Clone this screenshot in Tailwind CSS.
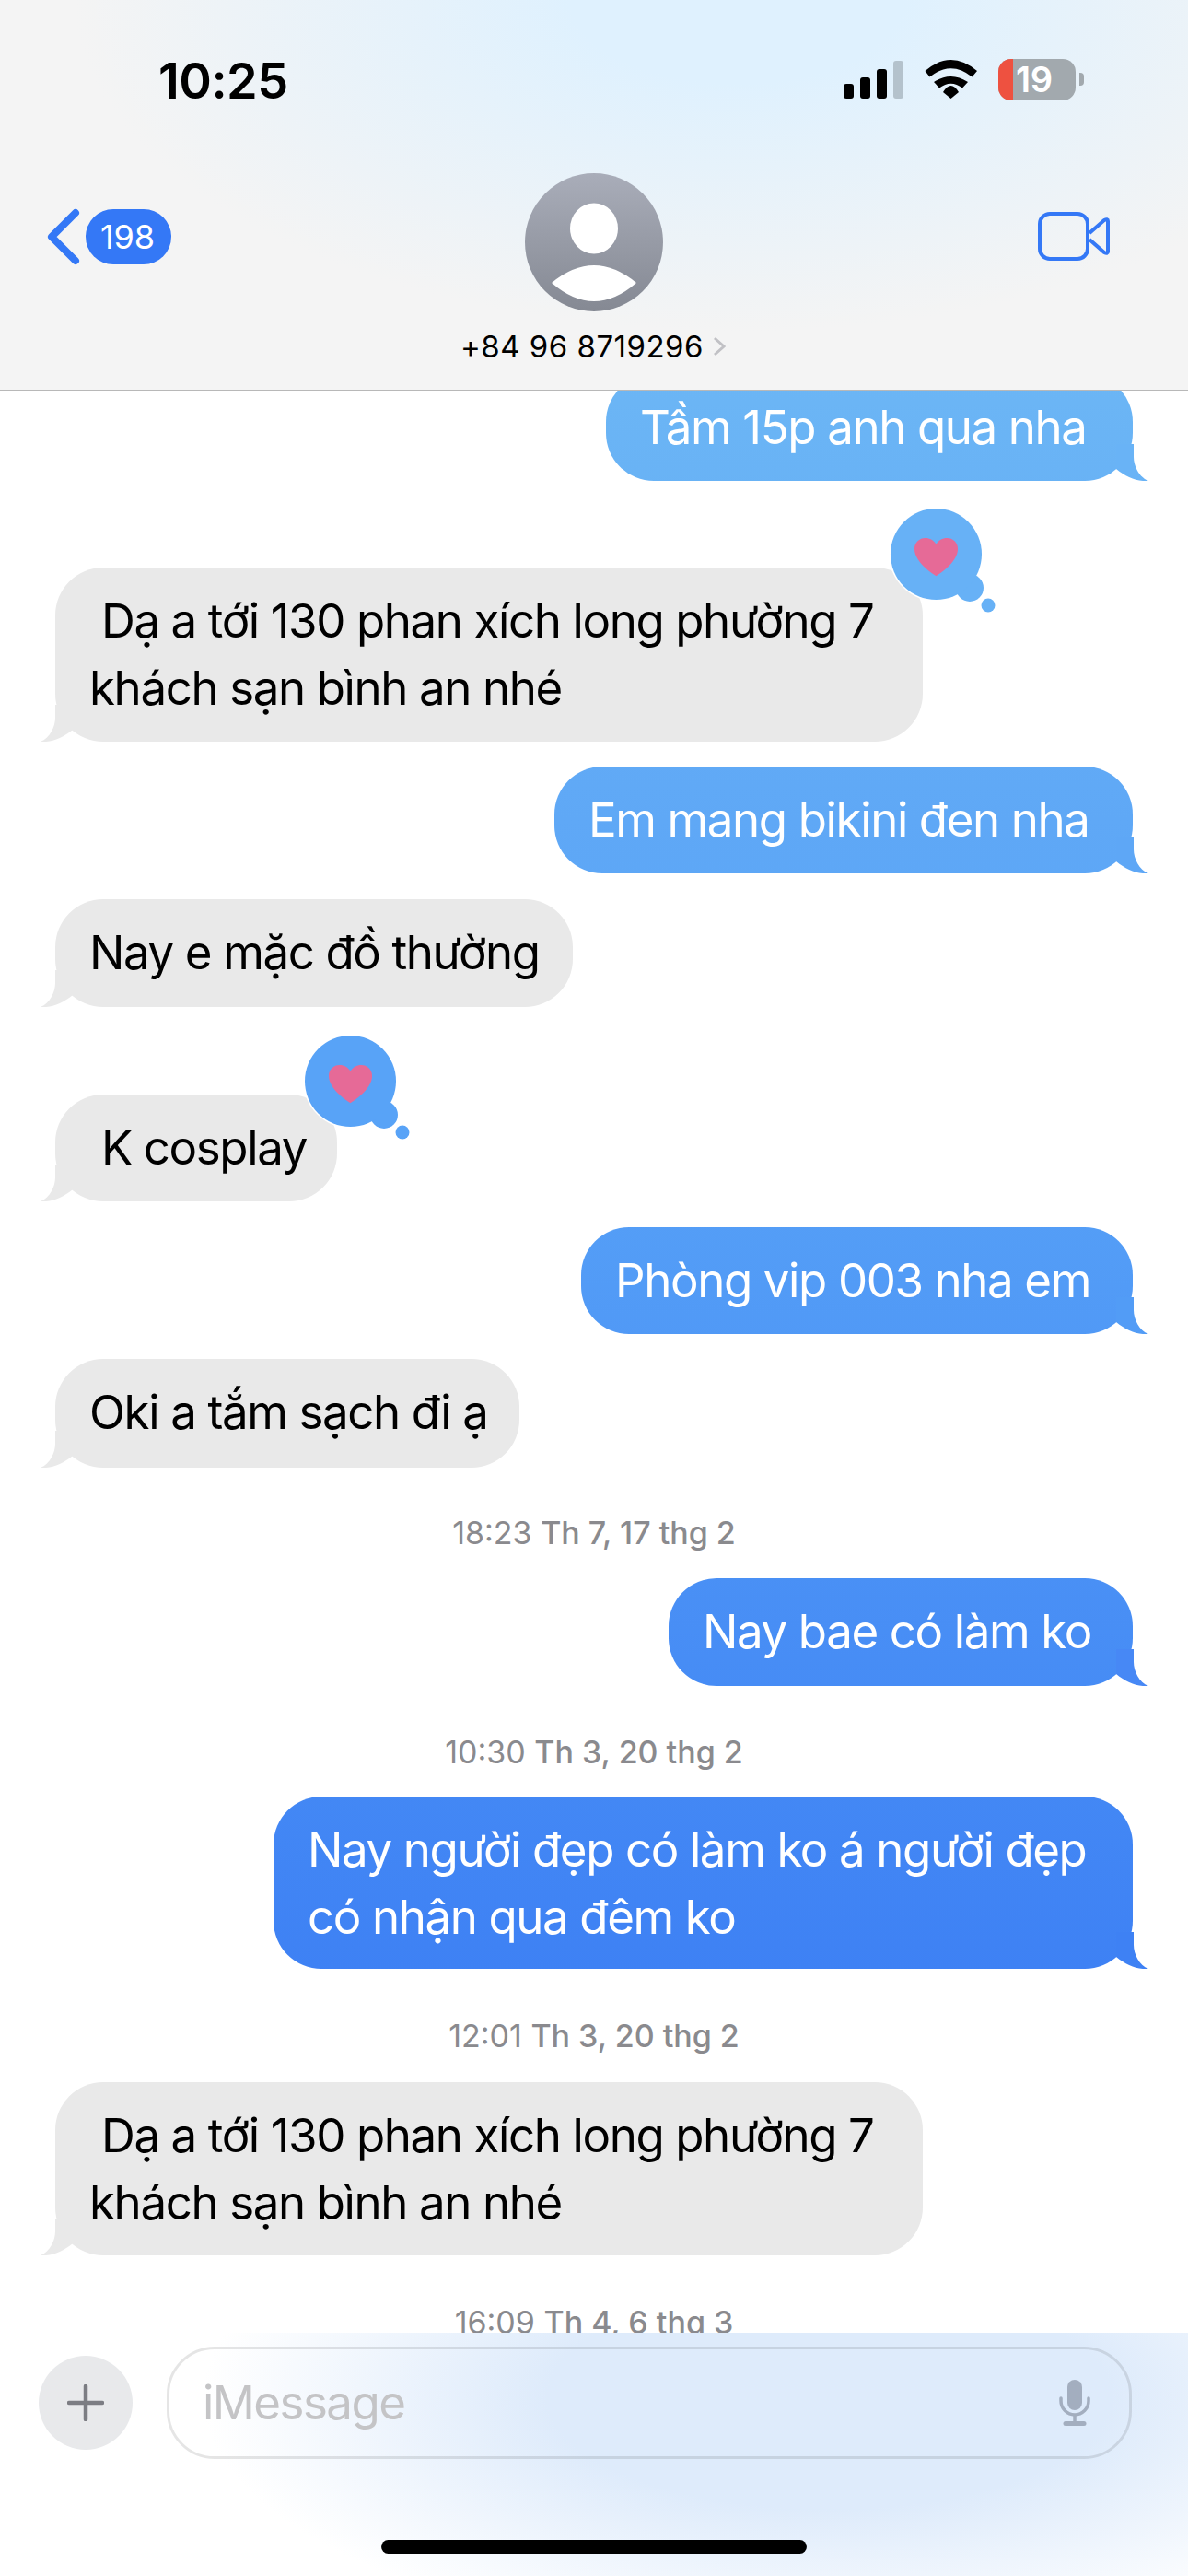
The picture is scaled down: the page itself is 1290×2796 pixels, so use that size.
<!DOCTYPE html>
<html lang="vi">
<head>
<meta charset="utf-8">
<title>Messages</title>
<script src="https://cdn.jsdelivr.net/npm/@tailwindcss/browser@4"></script>
</head>
<body class="bg-white">
<div class="w-[1290px] h-[2796px] flex flex-col overflow-hidden bg-white text-black [font-family:Inter,sans-serif]">

  <!-- header -->
  <header class="h-[424px] shrink-0 border-b border-[#b8b8b8] bg-[#f4f4f4] bg-[radial-gradient(ellipse_720px_360px_at_800px_0px,#dff1fe_25%,#f4f4f400_100%)]">
    <div class="h-[188px] flex justify-between pl-[172px] pr-[113px]">
      <div class="mt-[58px] text-[54px] leading-[60px] font-semibold tracking-[-0.01em]">10:25</div>
      <div class="flex items-start mt-[64px]">
        <div class="flex items-end gap-[7px] h-[43px] mr-[23px]">
          <div class="w-[11px] h-[16px] rounded-[3px] bg-black"></div>
          <div class="w-[11px] h-[23px] rounded-[3px] bg-black"></div>
          <div class="w-[11px] h-[32px] rounded-[3px] bg-black"></div>
          <div class="w-[11px] h-[41px] rounded-[3px] bg-[#b4c2cc]"></div>
        </div>
        <svg class="w-[58px] h-[42px] mt-[1px] mr-[22px]" viewBox="0 0 58 42" fill="#000">
          <path d="M0.5 12Q28.5 -12 57 12L51.5 18.5Q28.5 0 5.5 18.5Z"/>
          <path d="M10 24Q28.5 12 47 24L41 30.5Q28.5 21 16 30.5Z"/>
          <path d="M20 35Q28.5 21 37 35L28.5 42Z"/>
        </svg>
        <div class="w-[84px] h-[45px] rounded-[14px] overflow-hidden bg-[#a2a9ae] flex">
          <div class="w-[16px] bg-[#ee5140]"></div>
          <div class="pl-[3px] text-[38px] leading-[45px] font-semibold text-white tracking-[-0.01em]">19</div>
        </div>
        <div class="w-[5px] h-[14px] mt-[15px] ml-[4px] rounded-r-[4px] bg-[#a2a9ae]"></div>
      </div>
    </div>
    <div class="grid grid-cols-3">
      <div class="flex items-start pl-[51px] pt-[38px] gap-[6px]">
        <svg class="w-[36px] h-[62px]" viewBox="0 0 36 62" fill="none" stroke="#3478f6" stroke-width="8" stroke-linecap="round" stroke-linejoin="round"><path d="M31 5L5 31L31 57"/></svg>
        <div class="w-[93px] h-[60px] mt-[1px] rounded-full bg-[#3478f6] text-white text-[36px] leading-[60px] text-center pr-[2px]">198</div>
      </div>
      <div class="flex flex-col items-center">
        <div class="w-[150px] h-[150px] rounded-full overflow-hidden bg-linear-to-b from-[#a9adb9] to-[#858993]">
          <svg class="w-[150px] h-[150px]" viewBox="0 0 150 150" fill="#fff">
            <ellipse cx="75" cy="60" rx="26" ry="27.5"/>
            <path d="M29 119Q75 81 121 119Q75 159 29 119Z"/>
          </svg>
        </div>
        <div class="flex items-center mt-[18px] ml-[-2px]">
          <span class="text-[33px] leading-[40px] tracking-[0.015em]">+84 96 8719296</span>
          <svg class="w-[14px] h-[22px] ml-[10px]" viewBox="0 0 14 22" fill="none" stroke="#c1c1c5" stroke-width="3"><path d="M2 2L12 11L2 20"/></svg>
        </div>
      </div>
      <div class="flex justify-end pr-[85px] pt-[42px] items-start">
        <svg class="w-[78px] h-[53px]" viewBox="0 0 78 53" fill="none" stroke="#3478f6" stroke-width="4" stroke-linejoin="round"><rect x="2" y="2" width="52" height="49" rx="11"/><path d="M56 23L72 9Q76 7 76 10V43Q76 46 72 44L56 30"/></svg>
      </div>
    </div>
  </header>

  <!-- conversation -->
  <main class="flex-1 min-h-0 overflow-hidden flex flex-col pl-[60px] pr-[60px] text-[51px] leading-[73px] tracking-[-0.027em]">
    <div class="relative shrink-0 self-end w-[572px] h-[116px] mt-[-18px] py-[21px] pl-[37px] rounded-[52px] text-white bg-fixed bg-[linear-gradient(180deg,#6cb6f5_400px,#5fa8f6_890px,#58a3f7_1170px,#3e81f4_2140px)]">
      Tầm 15p anh qua nha
      <svg class="absolute right-[-17px] bottom-0 w-[60px] h-[40px] -scale-x-100" viewBox="0 0 60 40" fill="#69b3f6"><path d="M16 0V14C16 24 10 36 0 40C12 41 24 36 35 27V0Z"/></svg>
    </div>

    <div class="relative shrink-0 self-start w-[942px] h-[189px] mt-[94px] py-[21px] pl-[37px] rounded-[52px] bg-[#e9e9e9]">
      &nbsp;Dạ a tới 130 phan xích long phường 7<br>khách sạn bình an nhé
      <svg class="absolute left-[-16px] bottom-0 w-[60px] h-[40px]" viewBox="0 0 60 40" fill="#e9e9e9"><path d="M16 0V14C16 24 10 36 0 40C12 41 24 36 35 27V0Z"/></svg>
      <svg class="absolute left-[calc(100%-38px)] top-[-67px] w-[120px] h-[120px]" viewBox="0 0 120 120">
        <circle cx="52.5" cy="52.5" r="49.5" fill="#67b1f6" stroke="#fff" stroke-width="3"/>
        <circle cx="89" cy="89" r="15" fill="#67b1f6"/>
        <circle cx="52.5" cy="52.5" r="49.5" fill="#67b1f6"/>
        <circle cx="109" cy="108" r="7.5" fill="#67b1f6"/>
        <path transform="translate(29 35) scale(1.96)" fill="#e66a97" d="M12 21C12 21 0 14 0 6C0 2.5 2.7 0 6 0C8.5 0 10.8 1.3 12 3.5C13.2 1.3 15.5 0 18 0C21.3 0 24 2.5 24 6C24 14 12 21 12 21Z"/>
      </svg>
    </div>

    <div class="relative shrink-0 self-end w-[628px] h-[116px] mt-[27px] py-[21px] pl-[37px] rounded-[52px] text-white bg-fixed bg-[linear-gradient(180deg,#6cb6f5_400px,#5fa8f6_890px,#58a3f7_1170px,#3e81f4_2140px)]">
      Em mang bikini đen nha
      <svg class="absolute right-[-17px] bottom-0 w-[60px] h-[40px] -scale-x-100" viewBox="0 0 60 40" fill="#5ea7f6"><path d="M16 0V14C16 24 10 36 0 40C12 41 24 36 35 27V0Z"/></svg>
    </div>

    <div class="relative shrink-0 self-start w-[562px] h-[117px] mt-[28px] py-[21px] pl-[37px] rounded-[52px] bg-[#e9e9e9]">
      Nay e mặc đồ thường
      <svg class="absolute left-[-16px] bottom-0 w-[60px] h-[40px]" viewBox="0 0 60 40" fill="#e9e9e9"><path d="M16 0V14C16 24 10 36 0 40C12 41 24 36 35 27V0Z"/></svg>
    </div>

    <div class="relative shrink-0 self-start w-[306px] h-[116px] mt-[95px] py-[21px] pl-[37px] rounded-[52px] bg-[#e9e9e9]">
      &nbsp;K cosplay
      <svg class="absolute left-[-16px] bottom-0 w-[60px] h-[40px]" viewBox="0 0 60 40" fill="#e9e9e9"><path d="M16 0V14C16 24 10 36 0 40C12 41 24 36 35 27V0Z"/></svg>
      <svg class="absolute left-[calc(100%-38px)] top-[-67px] w-[120px] h-[120px]" viewBox="0 0 120 120">
        <circle cx="52.5" cy="52.5" r="49.5" fill="#58a3f7" stroke="#fff" stroke-width="3"/>
        <circle cx="89" cy="89" r="15" fill="#58a3f7"/>
        <circle cx="52.5" cy="52.5" r="49.5" fill="#58a3f7"/>
        <circle cx="109" cy="108" r="7.5" fill="#58a3f7"/>
        <path transform="translate(29 35) scale(1.96)" fill="#e66a97" d="M12 21C12 21 0 14 0 6C0 2.5 2.7 0 6 0C8.5 0 10.8 1.3 12 3.5C13.2 1.3 15.5 0 18 0C21.3 0 24 2.5 24 6C24 14 12 21 12 21Z"/>
      </svg>
    </div>

    <div class="relative shrink-0 self-end w-[599px] h-[116px] mt-[28px] py-[21px] pl-[37px] rounded-[52px] text-white bg-fixed bg-[linear-gradient(180deg,#6cb6f5_400px,#5fa8f6_890px,#58a3f7_1170px,#3e81f4_2140px)]">
      Phòng vip 003 nha em
      <svg class="absolute right-[-17px] bottom-0 w-[60px] h-[40px] -scale-x-100" viewBox="0 0 60 40" fill="#529cf6"><path d="M16 0V14C16 24 10 36 0 40C12 41 24 36 35 27V0Z"/></svg>
    </div>

    <div class="relative shrink-0 self-start w-[504px] h-[118px] mt-[27px] py-[21px] pl-[37px] rounded-[52px] bg-[#e9e9e9]">
      Oki a tắm sạch đi ạ
      <svg class="absolute left-[-16px] bottom-0 w-[60px] h-[40px]" viewBox="0 0 60 40" fill="#e9e9e9"><path d="M16 0V14C16 24 10 36 0 40C12 41 24 36 35 27V0Z"/></svg>
    </div>

    <div class="h-[120px] shrink-0 pt-[22px] flex items-center justify-center text-[34px] leading-[40px] tracking-normal text-[#8a8a8e]"><span class="font-normal">18:23&nbsp;</span><span class="font-medium">Th 7, 17 thg 2</span></div>

    <div class="relative shrink-0 self-end w-[504px] h-[117px] py-[21px] pl-[37px] rounded-[52px] text-white bg-fixed bg-[linear-gradient(180deg,#6cb6f5_400px,#5fa8f6_890px,#58a3f7_1170px,#3e81f4_2140px)]">
      Nay bae có làm ko
      <svg class="absolute right-[-17px] bottom-0 w-[60px] h-[40px] -scale-x-100" viewBox="0 0 60 40" fill="#4788f5"><path d="M16 0V14C16 24 10 36 0 40C12 41 24 36 35 27V0Z"/></svg>
    </div>

    <div class="h-[120px] shrink-0 pt-[24px] flex items-center justify-center text-[34px] leading-[40px] tracking-normal text-[#8a8a8e]"><span class="font-normal">10:30&nbsp;</span><span class="font-medium">Th 3, 20 thg 2</span></div>

    <div class="relative shrink-0 self-end w-[933px] h-[187px] py-[21px] pl-[37px] rounded-[52px] text-white bg-fixed bg-[linear-gradient(180deg,#6cb6f5_400px,#5fa8f6_890px,#58a3f7_1170px,#3e81f4_2140px)]">
      Nay người đẹp có làm ko á người đẹp<br>có nhận qua đêm ko
      <svg class="absolute right-[-17px] bottom-0 w-[60px] h-[40px] -scale-x-100" viewBox="0 0 60 40" fill="#3e81f4"><path d="M16 0V14C16 24 10 36 0 40C12 41 24 36 35 27V0Z"/></svg>
    </div>

    <div class="h-[123px] shrink-0 pt-[23px] flex items-center justify-center text-[34px] leading-[40px] tracking-normal text-[#8a8a8e]"><span class="font-normal">12:01&nbsp;</span><span class="font-medium">Th 3, 20 thg 2</span></div>

    <div class="relative shrink-0 self-start w-[942px] h-[188px] py-[21px] pl-[37px] rounded-[52px] bg-[#e9e9e9]">
      &nbsp;Dạ a tới 130 phan xích long phường 7<br>khách sạn bình an nhé
      <svg class="absolute left-[-16px] bottom-0 w-[60px] h-[40px]" viewBox="0 0 60 40" fill="#e9e9e9"><path d="M16 0V14C16 24 10 36 0 40C12 41 24 36 35 27V0Z"/></svg>
    </div>

    <div class="h-[120px] shrink-0 pt-[26px] flex items-center justify-center text-[34px] leading-[40px] tracking-normal text-[#8a8a8e]"><span class="font-normal">16:09&nbsp;</span><span class="font-medium">Th 4, 6 thg 3</span></div>
  </main>

  <!-- composer -->
  <footer class="h-[264px] shrink-0 flex flex-col bg-white bg-[radial-gradient(ellipse_680px_270px_at_900px_70px,#deebfb_45%,#ffffff00_100%)]">
    <div class="flex items-center pt-[15px] pl-[42px] pr-[61px] gap-[37px]">
      <div class="w-[102px] h-[102px] shrink-0 rounded-full bg-[#e8e9eb] flex items-center justify-center">
        <svg class="w-[40px] h-[40px]" viewBox="0 0 40 40" stroke="#7c7d83" stroke-width="4.5" stroke-linecap="round"><path d="M20 2V38M2 20H38"/></svg>
      </div>
      <div class="flex-1 h-[122px] rounded-[52px] border-[3px] border-[#0000001a] flex items-center justify-between pl-[36px] pr-[42px]">
        <span class="text-[51px] leading-[60px] tracking-[-0.03em] text-[#c4c4c6]">iMessage</span>
        <svg class="w-[34px] h-[50px]" viewBox="0 0 34 50" fill="none" stroke="#a3aebf">
          <rect x="9" y="0" width="16" height="33" rx="8" fill="#a3aebf" stroke="none"/>
          <path d="M2 20V23A15 15 0 0 0 32 23V20" stroke-width="3.5" stroke-linecap="round"/>
          <path d="M17 38V46" stroke-width="3.5"/>
          <path d="M7 47.5H27" stroke-width="5" stroke-linecap="round"/>
        </svg>
      </div>
    </div>
    <div class="w-[462px] h-[15px] mt-[88px] mx-auto rounded-full bg-black"></div>
  </footer>
</div>
</body>
</html>
